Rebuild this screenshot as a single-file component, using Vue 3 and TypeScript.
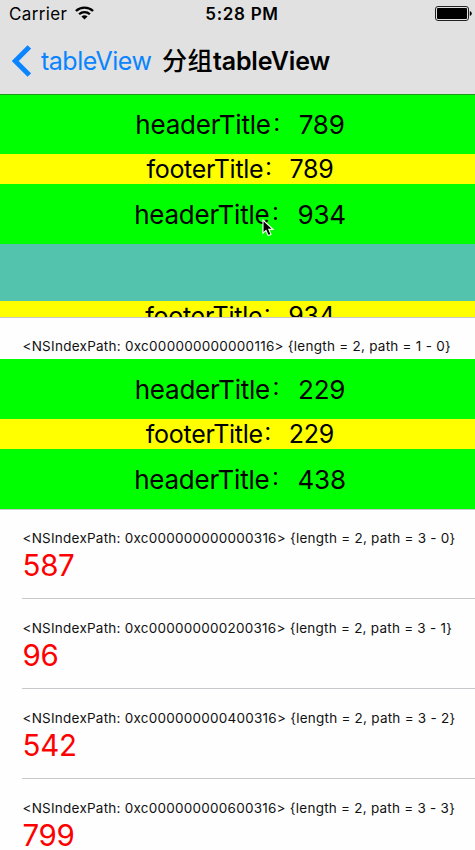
<script setup lang="ts">
interface Band {
  kind: 'header' | 'footer'
  label: string
  value: number
}

interface Row {
  address: string
  path: string
  value: number
}

const topBands: Band[] = [
  { kind: 'header', label: 'headerTitle', value: 789 },
  { kind: 'footer', label: 'footerTitle', value: 789 },
  { kind: 'header', label: 'headerTitle', value: 934 },
]

const middleBands: Band[] = [
  { kind: 'header', label: 'headerTitle', value: 229 },
  { kind: 'footer', label: 'footerTitle', value: 229 },
  { kind: 'header', label: 'headerTitle', value: 438 },
]

const rows: Row[] = [
  { address: '0xc000000000000316', path: '3 - 0', value: 587 },
  { address: '0xc000000000200316', path: '3 - 1', value: 96 },
  { address: '0xc000000000400316', path: '3 - 2', value: 542 },
  { address: '0xc000000000600316', path: '3 - 3', value: 799 },
]

const describe = (address: string, path: string): string =>
  `<NSIndexPath: ${address}> {length = 2, path = ${path}}`
</script>

<template>
  <div class="screen">
    <header class="chrome">
      <div class="status">
        <div class="carrier">
          <span>Carrier</span>
          <svg class="wifi" viewBox="0 0 18 14" width="19" height="14" preserveAspectRatio="none">
            <path d="M.9 5a11.6 11.6 0 0 1 16.2 0" />
            <path d="M3.9 8.2a7.3 7.3 0 0 1 10.2 0" />
            <path class="dot" d="M6.1 10.6a4.2 4.2 0 0 1 5.8 0L9 13.6z" />
          </svg>
        </div>
        <span class="time">5:28 PM</span>
        <svg class="battery" viewBox="0 0 37 15" width="37" height="15">
          <rect class="shell" x=".5" y=".5" width="33" height="14" rx="2.5" />
          <rect x="2" y="2" width="30" height="11" rx="1" />
          <path d="M34.8 5q2 .6 2 2.5t-2 2.5z" />
        </svg>
      </div>
      <nav class="nav">
        <svg class="chevron" viewBox="0 0 19 32" width="19" height="32">
          <path d="M17.3 1.9 3.2 16l14.1 14.1" />
        </svg>
        <span class="back">tableView</span>
        <h1 class="title"><span class="han">分组</span>tableView</h1>
      </nav>
    </header>

    <div v-for="(b, i) in topBands" :key="'t' + i" class="band" :class="b.kind">
      <span class="label">{{ b.label }}</span><span class="colon">：</span><span class="num">{{ b.value }}</span>
    </div>

    <div class="gap"></div>
    <div class="clip">
      <div class="band footer">
        <span class="label">footerTitle</span><span class="colon">：</span><span class="num">934</span>
      </div>
    </div>

    <div class="partial">
      <span class="path">{{ describe('0xc000000000000116', '1 - 0') }}</span>
    </div>

    <div v-for="(b, i) in middleBands" :key="'m' + i" class="band" :class="b.kind">
      <span class="label">{{ b.label }}</span><span class="colon">：</span><span class="num">{{ b.value }}</span>
    </div>

    <ul class="list">
      <li v-for="r in rows" :key="r.address" class="row">
        <span class="path">{{ describe(r.address, r.path) }}</span>
        <span class="value">{{ r.value }}</span>
      </li>
    </ul>

    <svg class="cursor" viewBox="0 0 12 18" width="12" height="18">
      <path d="M1 1v13.2l3-2.8 2.2 5.2 2.8-1.2-2.2-5H11z" />
    </svg>
  </div>
</template>

<style>
body {
  background: #fff;
}
</style>

<style scoped>
.screen {
  position: relative;
  width: 475px;
  height: 850px;
  overflow: hidden;
  background: #fefefe;
  color: #000;
  font-family: Inter, 'Noto Sans CJK SC', sans-serif;
}
.chrome {
  box-sizing: border-box;
  height: 95px;
  background: #e1e1e1;
  border-bottom: 1px solid #1d991d;
}
.status {
  display: grid;
  grid-template-columns: 1fr auto 1fr;
  align-items: center;
  height: 28px;
  padding: 0 3px 0 9px;
  font-size: 17px;
}
.carrier {
  display: flex;
  align-items: center;
  gap: 8px;
  letter-spacing: 0.37px;
}
.wifi {
  margin-top: -3px;
  fill: none;
  stroke: #000;
  stroke-width: 2.3;
}
.wifi .dot {
  fill: #000;
  stroke: none;
}
.time {
  padding-left: 3px;
  font-weight: 600;
  letter-spacing: 0.7px;
}
.battery {
  justify-self: end;
  margin-top: -1px;
}
.battery .shell {
  fill: none;
  stroke: #222;
}
.nav {
  display: flex;
  align-items: center;
  height: 66px;
  padding-left: 12px;
  font-size: 25px;
  line-height: 34px;
}
.chevron {
  fill: none;
  stroke: #0a84ff;
  stroke-width: 5;
}
.back {
  width: 112px;
  margin-left: 10px;
  color: #0a84ff;
  letter-spacing: -0.5px;
}
.title {
  margin: 0 0 0 9px;
  font-size: 25px;
  font-weight: 600;
  letter-spacing: -0.2px;
  white-space: nowrap;
}
.han {
  font-weight: 500;
  letter-spacing: 0.5px;
}
.band {
  display: flex;
  justify-content: center;
  align-items: center;
  box-sizing: border-box;
  padding-left: 5px;
  font-size: 26px;
  line-height: 30px;
}
.header {
  height: 60px;
  padding-top: 1px;
  background: #0f0;
}
.chrome + .header {
  height: 59px;
}
.footer {
  height: 30px;
  background: #ff0;
  font-size: 25px;
}
.label {
  letter-spacing: -0.23px;
}
.footer .label {
  letter-spacing: -0.28px;
}
.colon {
  width: 28px;
  padding: 0 0 3px 1px;
  box-sizing: border-box;
  font-size: 20px;
  line-height: 20px;
}
.footer .colon {
  width: 26px;
  padding-left: 0;
}
.num {
  letter-spacing: -0.2px;
}
.gap {
  height: 57px;
  background: #53c3ae;
}
.clip {
  height: 16px;
  overflow: hidden;
}
.partial {
  box-sizing: border-box;
  height: 42px;
  padding: 19px 0 0 22.5px;
  border-top: 1px solid #c8c7cc;
}
.path {
  display: block;
  font-size: 13.5px;
  line-height: 18px;
  letter-spacing: 0.26px;
  white-space: nowrap;
  color: #111;
}
.list {
  margin: 0;
  padding: 0;
  list-style: none;
  border-top: 1px solid #c8c7cc;
}
.row {
  box-sizing: border-box;
  height: 90px;
  margin-left: 22px;
  padding: 20px 0 0 0.5px;
  border-bottom: 1px solid #c8c7cc;
}
.row:first-child {
  height: 89px;
  padding-top: 19px;
}
.row .path {
  letter-spacing: 0.24px;
}
.value {
  display: block;
  color: #f00;
  font-size: 29.5px;
  line-height: 36px;
  letter-spacing: -0.3px;
}
.cursor {
  position: absolute;
  left: 262px;
  top: 219px;
  fill: #000;
  stroke: #fff;
  stroke-width: 1.1;
}
</style>
